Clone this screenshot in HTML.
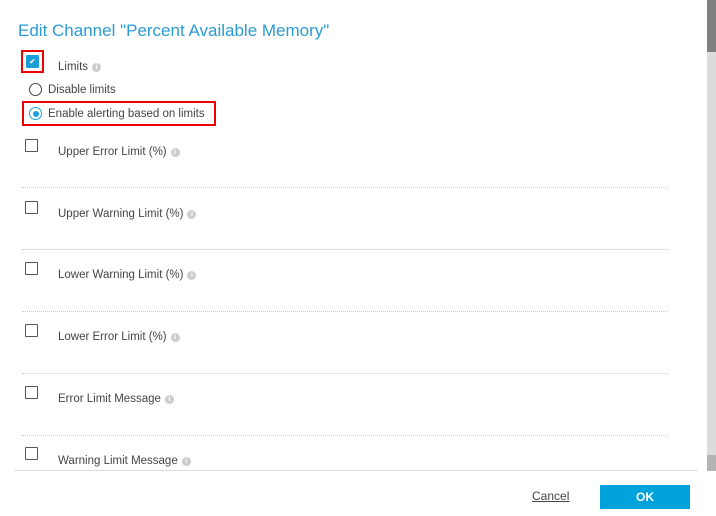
<!DOCTYPE html>
<html><head><style>
body{margin:0;width:716px;height:516px;overflow:hidden;background:#fff;font-family:"Liberation Sans",sans-serif;position:relative;color:#333}
.a{position:absolute}
h1{position:absolute;left:18px;top:21px;margin:0;font-weight:normal;font-size:17px;color:#2b9bd3;white-space:nowrap}
.lbl{position:absolute;left:58px;font-size:11.5px;color:#444;white-space:nowrap}
.i{display:inline-block;width:9px;height:9px;border-radius:50%;background:#ccc;color:#fff;font-size:7px;line-height:9px;text-align:center;margin-left:4px;vertical-align:1px;font-weight:bold}
.cb{position:absolute;left:25px;width:11px;height:11px;border:1.5px solid #555;border-radius:1px}
.sep{position:absolute;left:22px;width:646px;border-top:1px dotted #ccc}
.rl{position:absolute;font-size:11.5px;color:#444;white-space:nowrap}
.rad{position:absolute;width:11px;height:11px;border:1.5px solid #444;border-radius:50%}
</style></head><body>
<h1>Edit Channel "Percent Available Memory"</h1>
<div class="a" style="left:21px;top:50px;width:19px;height:19px;border:2px solid #e00"></div>
<div class="a" style="left:26px;top:55px;width:13px;height:13px;background:#1c9fd9;border-radius:1px;color:#fff;font-size:8px;line-height:13px;text-align:center">✔</div>
<div class="lbl" style="top:61px">Limits<span class="i">i</span></div>
<div class="rad" style="left:29px;top:83px"></div>
<div class="rl" style="left:48px;top:84px">Disable limits</div>
<div class="a" style="left:22px;top:101px;width:190px;height:21px;border:2px solid #e00"></div>
<div class="rad" style="left:29px;top:107px;border-color:#1c9fd9"></div>
<div class="a" style="left:33px;top:111px;width:6px;height:6px;border-radius:50%;background:#1c9fd9"></div>
<div class="rl" style="left:48px;top:108px">Enable alerting based on limits</div>

<div class="cb" style="top:139px"></div><div class="lbl" style="top:146px">Upper Error Limit (%)<span class="i">i</span></div>
<div class="sep" style="top:187px"></div>
<div class="cb" style="top:201px"></div><div class="lbl" style="top:208px">Upper Warning Limit (%)<span class="i">i</span></div>
<div class="sep" style="top:249px"></div>
<div class="cb" style="top:262px"></div><div class="lbl" style="top:269px">Lower Warning Limit (%)<span class="i">i</span></div>
<div class="sep" style="top:311px"></div>
<div class="cb" style="top:324px"></div><div class="lbl" style="top:331px">Lower Error Limit (%)<span class="i">i</span></div>
<div class="sep" style="top:373px"></div>
<div class="cb" style="top:386px"></div><div class="lbl" style="top:393px">Error Limit Message<span class="i">i</span></div>
<div class="sep" style="top:435px"></div>
<div class="cb" style="top:447px"></div><div class="lbl" style="top:455px">Warning Limit Message<span class="i">i</span></div>

<div class="a" style="left:14px;top:470px;width:684px;height:1px;background:#ddd"></div>
<div class="a" style="left:532px;top:489px;font-size:12px;color:#444;text-decoration:underline">Cancel</div>
<div class="a" style="left:600px;top:485px;width:90px;height:24px;background:#00a2db;color:#fff;font-weight:bold;font-size:12px;line-height:24px;text-align:center">OK</div>

<div class="a" style="left:707px;top:0;width:9px;height:455px;background:#dcdcdc"></div>
<div class="a" style="left:707px;top:0;width:9px;height:52px;background:#808080"></div>
<div class="a" style="left:707px;top:455px;width:9px;height:16px;background:#b4b4b4"></div>
</body></html>
